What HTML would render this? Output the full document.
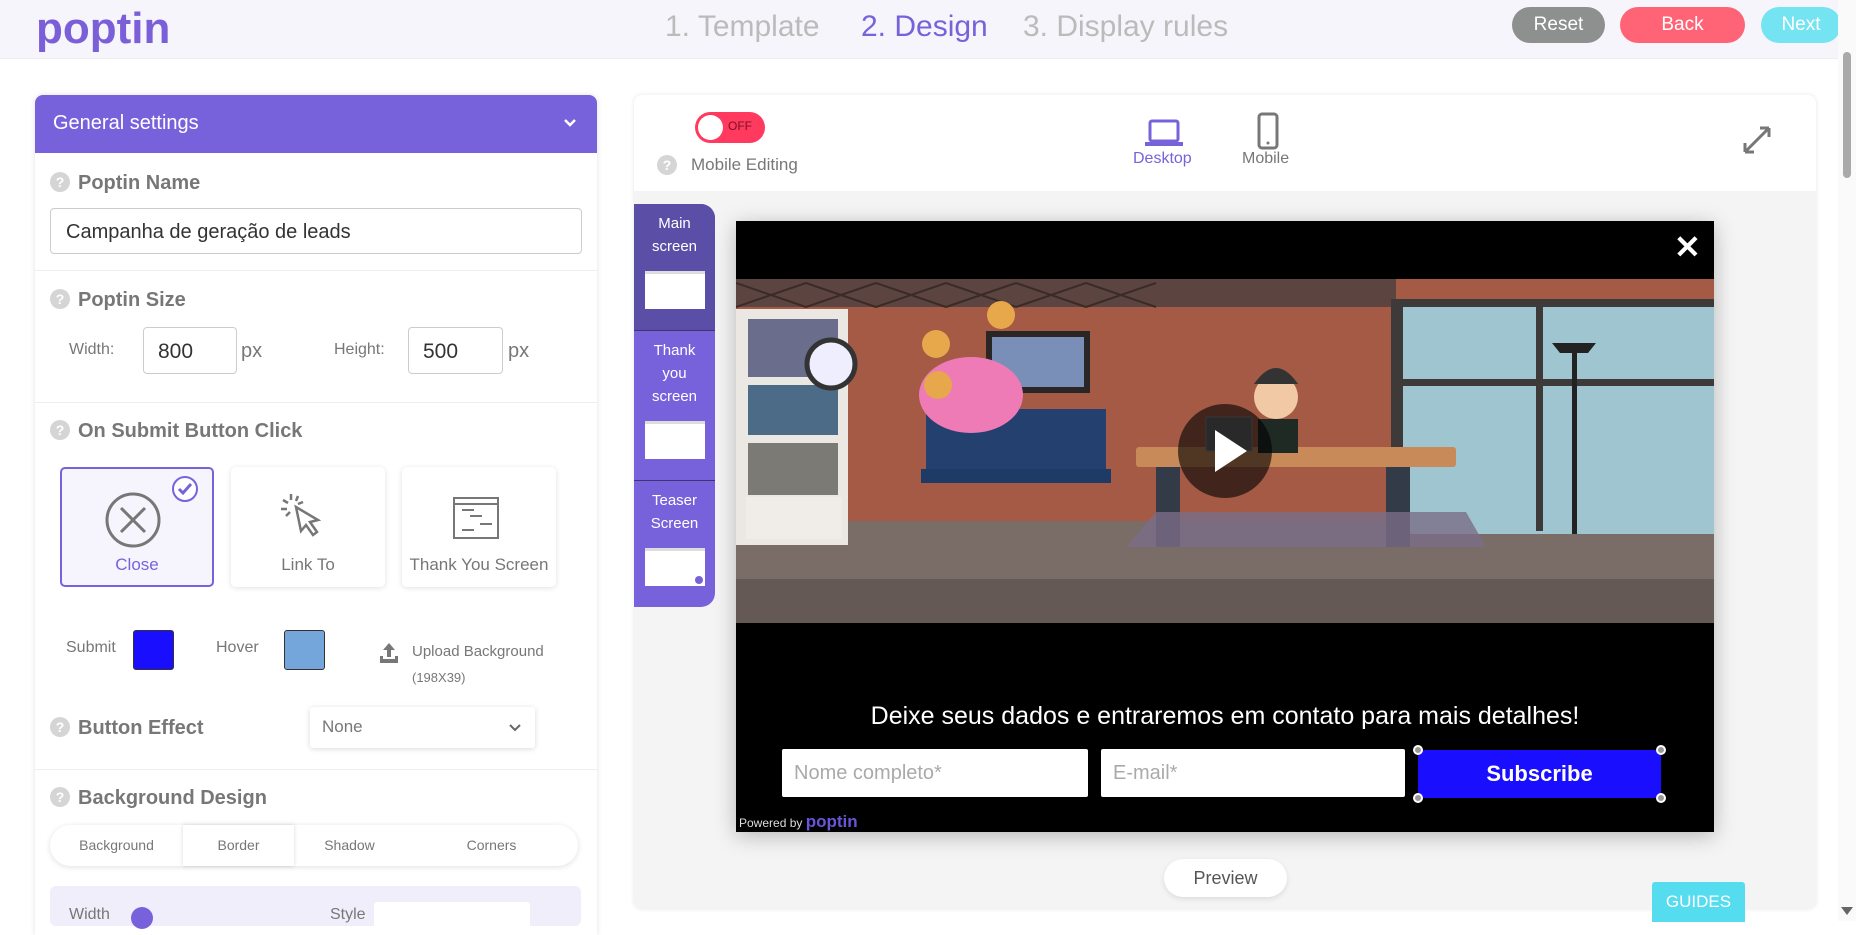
<!DOCTYPE html>
<html><head><meta charset="utf-8">
<style>
*{box-sizing:border-box;margin:0;padding:0}
body{width:1856px;height:921px;overflow:hidden;background:#fff;font-family:"Liberation Sans",sans-serif;position:relative;color:#555}
.a{position:absolute}
.hdr{left:0;top:0;width:1856px;height:59px;background:#f6f5fb;border-bottom:1px solid #eee}
.step{top:10px;font-size:30px;color:#bbb}
.btn{top:7px;height:36px;border-radius:18px;color:#fff;font-size:19px;text-align:center;line-height:36px}
.panel{left:35px;top:95px;width:562px;height:840px;background:#fff;box-shadow:0 0 6px rgba(0,0,0,.12);border-radius:8px 8px 0 0}
.ph{left:35px;top:95px;width:562px;height:58px;background:#7862dc;border-radius:8px 8px 0 0;color:#fff;font-size:20px;padding:17px 18px}
.lbl{font-size:20px;font-weight:bold;color:#777;left:50px}
.q{display:inline-block;width:20px;height:20px;border-radius:50%;background:#d5d5d5;color:#fff;font-size:14px;text-align:center;line-height:20px;margin-right:8px;vertical-align:2px;font-weight:bold}
.inp{border:1px solid #ccc;border-radius:4px;background:#fff;color:#333}
.div{left:35px;width:562px;height:1px;background:#eee}
.card{top:467px;width:154px;height:120px;background:#fff;border-radius:5px;box-shadow:0 1px 6px rgba(0,0,0,.12);text-align:center;font-size:17px;color:#777}
.card span{position:absolute;left:0;right:0;top:88px}
.sm{font-size:16px;color:#777}
.tab{top:825px;height:41px;font-size:14px;color:#777;text-align:center;line-height:41px}
.st{left:634px;width:81px;color:#fff;font-size:15px;text-align:center;line-height:23px;padding-top:8px}
.st i{display:block;margin:13px auto 0;width:60px;height:38px;background:#fff;border-top:3px solid #ddd}
</style></head><body>
<div class="a hdr"></div>
<div class="a" style="left:36px;top:4px;font-size:44px;font-weight:bold;color:#7b5fd9;letter-spacing:0px">poptin</div>
<div class="a step" style="left:665px">1. Template</div>
<div class="a step" style="left:861px;color:#7862dc">2. Design</div>
<div class="a step" style="left:1023px">3. Display rules</div>
<div class="a btn" style="left:1512px;width:93px;background:#8e9090">Reset</div>
<div class="a btn" style="left:1620px;width:125px;background:#ff6476">Back</div>
<div class="a btn" style="left:1761px;width:80px;background:#74e3f2">Next</div>

<div class="a panel"></div>
<div class="a ph">General settings<svg style="position:absolute;right:20px;top:23px" width="14" height="10"><path d="M2 2l5 5 5-5" fill="none" stroke="#fff" stroke-width="2.5"/></svg></div>
<div class="a lbl" style="top:172px"><span class="q">?</span>Poptin Name</div>
<div class="a inp" style="left:50px;top:208px;width:532px;height:46px;font-size:20px;padding:12px 15px">Campanha de geração de leads</div>
<div class="a div" style="top:270px"></div>
<div class="a lbl" style="top:289px"><span class="q">?</span>Poptin Size</div>
<div class="a sm" style="left:69px;top:341px">Width:</div>
<div class="a inp" style="left:143px;top:327px;width:94px;height:47px;font-size:21px;padding:12px 14px">800</div>
<div class="a" style="left:241px;top:340px;font-size:20px;color:#777">px</div>
<div class="a sm" style="left:334px;top:341px">Height:</div>
<div class="a inp" style="left:408px;top:327px;width:95px;height:47px;font-size:21px;padding:12px 14px">500</div>
<div class="a" style="left:508px;top:340px;font-size:20px;color:#777">px</div>
<div class="a div" style="top:402px"></div>
<div class="a lbl" style="top:420px"><span class="q">?</span>On Submit Button Click</div>
<div class="a card" style="left:60px;border:2px solid #7862dc;background:#f6f5fd;box-shadow:none;color:#7862dc">
<svg style="position:absolute;left:40px;top:20px" width="60" height="60"><circle cx="31" cy="31" r="26" fill="none" stroke="#777" stroke-width="3"/><path d="M19 19L43 43M43 19L19 43" stroke="#777" stroke-width="3"/></svg>
<svg style="position:absolute;left:108px;top:5px" width="30" height="30"><circle cx="15" cy="15" r="12" fill="#fff" stroke="#7862dc" stroke-width="2"/><path d="M9 15l4 4 8-9" fill="none" stroke="#7862dc" stroke-width="3"/></svg>
<span style="top:86px">Close</span></div>
<div class="a card" style="left:231px"><svg style="position:absolute;left:50px;top:25px" width="50" height="60"><path d="M15 15l5 24 5-6 7 10 4-3-7-10 8-2z" fill="none" stroke="#777" stroke-width="2.5"/><path d="M10 2v6M2 8l5 3M0 17h6M17 4l-2 5M22 10l-5 2M5 24l4-4" stroke="#777" stroke-width="2.5"/></svg><span>Link To</span></div>
<div class="a card" style="left:402px"><svg style="position:absolute;left:50px;top:27px" width="50" height="48"><rect x="2" y="4" width="44" height="40" fill="none" stroke="#777" stroke-width="2"/><path d="M2 10h44M10 16h12M18 22h12M28 30h12M10 36h12" stroke="#777" stroke-width="2"/></svg><span>Thank You Screen</span></div>
<div class="a sm" style="left:66px;top:639px">Submit</div>
<div class="a" style="left:133px;top:630px;width:41px;height:40px;background:#1a0eff;border:1px solid #333;border-radius:3px"></div>
<div class="a sm" style="left:216px;top:639px">Hover</div>
<div class="a" style="left:284px;top:630px;width:41px;height:40px;background:#74a6dc;border:1px solid #333;border-radius:3px"></div>
<svg class="a" style="left:379px;top:642px" width="20" height="22"><path d="M10 1l-6 7h4v7h4V8h4z M1 14v7h18v-7h-3v3H4v-3z" fill="#777"/></svg>
<div class="a" style="left:412px;top:643px;font-size:15px;color:#777">Upload Background</div>
<div class="a" style="left:412px;top:670px;font-size:13px;color:#777">(198X39)</div>
<div class="a lbl" style="top:717px"><span class="q">?</span>Button Effect</div>
<div class="a" style="left:310px;top:707px;width:225px;height:41px;background:#fff;box-shadow:0 1px 6px rgba(0,0,0,.15);border-radius:3px;font-size:17px;color:#777;padding:10px 12px">None<svg style="position:absolute;right:14px;top:17px" width="12" height="8"><path d="M1 1l5 5 5-5" fill="none" stroke="#666" stroke-width="2"/></svg></div>
<div class="a div" style="top:769px"></div>
<div class="a lbl" style="top:787px"><span class="q">?</span>Background Design</div>
<div class="a" style="left:50px;top:825px;width:528px;height:41px;border-radius:21px;background:#fff;box-shadow:0 1px 6px rgba(0,0,0,.13)"></div>
<div class="a" style="left:183px;top:825px;width:111px;height:41px;background:#fff;box-shadow:0 0 4px rgba(0,0,0,.15)"></div>
<div class="a tab" style="left:50px;width:133px">Background</div>
<div class="a tab" style="left:183px;width:111px">Border</div>
<div class="a tab" style="left:294px;width:111px">Shadow</div>
<div class="a tab" style="left:405px;width:173px">Corners</div>
<div class="a" style="left:50px;top:886px;width:531px;height:40px;background:#f0eefa;border-radius:6px"></div>
<div class="a" style="left:69px;top:906px;font-size:16px;color:#777">Width</div>
<div class="a" style="left:131px;top:907px;width:22px;height:22px;border-radius:50%;background:#7862dc"></div>
<div class="a" style="left:330px;top:906px;font-size:16px;color:#777">Style</div>
<div class="a" style="left:374px;top:902px;width:156px;height:30px;background:#fff;border-radius:3px"></div>

<div class="a" style="left:634px;top:95px;width:1182px;height:814px;background:#f4f4f4;border-radius:8px;box-shadow:0 0 5px rgba(0,0,0,.1)"></div>
<div class="a" style="left:634px;top:95px;width:1182px;height:96px;background:#fff;border-radius:8px 8px 0 0"></div>
<div class="a" style="left:695px;top:112px;width:70px;height:31px;border-radius:16px;background:#ff3a5e"></div>
<div class="a" style="left:698px;top:115px;width:25px;height:25px;border-radius:50%;background:#fff"></div>
<div class="a" style="left:728px;top:119px;font-size:12px;color:#7a1020">OFF</div>
<div class="a" style="left:657px;top:155px"><span class="q">?</span></div>
<div class="a" style="left:691px;top:155px;font-size:17px;color:#777">Mobile Editing</div>
<svg class="a" style="left:1144px;top:118px" width="40" height="32"><rect x="6" y="3" width="28" height="20" rx="2" fill="none" stroke="#7862dc" stroke-width="3"/><rect x="1" y="24" width="38" height="4" fill="#7862dc"/></svg>
<div class="a" style="left:1133px;top:150px;font-size:16px;color:#7862dc">Desktop</div>
<svg class="a" style="left:1256px;top:112px" width="24" height="38"><rect x="3" y="2" width="18" height="34" rx="3" fill="none" stroke="#777" stroke-width="3"/><circle cx="12" cy="31" r="1.5" fill="#777"/></svg>
<div class="a" style="left:1242px;top:150px;font-size:16px;color:#777">Mobile</div>
<svg class="a" style="left:1742px;top:125px" width="30" height="30"><path d="M3 27L27 3M27 3h-9M27 3v9M3 27h9M3 27v-9" fill="none" stroke="#777" stroke-width="3"/></svg>

<div class="a" style="left:634px;top:204px;width:81px;height:403px;background:#7862dc;border-radius:0 14px 14px 0"></div>
<div class="a st" style="top:204px;height:126px;background:#5b4ea6;border-radius:0 14px 0 0">Main<br>screen<i></i></div>
<div class="a st" style="top:330px;height:150px;border-top:1px solid #3d3470">Thank<br>you<br>screen<i></i></div>
<div class="a st" style="top:480px;height:127px;border-top:1px solid #3d3470">Teaser<br>Screen<i style="position:relative"><b style="position:absolute;right:2px;bottom:2px;width:8px;height:8px;border-radius:50%;background:#7862dc"></b></i></div>

<div class="a" style="left:736px;top:221px;width:978px;height:611px;background:#000;box-shadow:0 4px 20px rgba(0,0,0,.25)"></div>
<div class="a" style="left:1674px;top:228px;font-size:32px;font-weight:bold;color:#fff">&#10005;</div>
<svg class="a" style="left:736px;top:279px" width="978" height="344" viewBox="0 0 978 344">
<rect width="978" height="344" fill="#a45a45"/>
<rect x="0" y="0" width="660" height="28" fill="#5c4540"/>
<path d="M0 4L70 28M70 4L0 28M70 4L140 28M140 4L70 28M140 4L210 28M210 4L140 28M210 4L280 28M280 4L210 28M280 4L350 28M350 4L280 28M350 4L420 28M420 4L350 28" stroke="#3a2b28" stroke-width="2"/>
<rect x="0" y="242" width="978" height="102" fill="#7a6c66"/>
<rect x="0" y="300" width="978" height="44" fill="#655955"/>
<rect x="660" y="20" width="318" height="235" fill="#9fc6d0"/>
<path d="M655 20h323v8H667v227h-12z" fill="#3e3a3a"/>
<rect x="800" y="24" width="7" height="228" fill="#3e3a3a"/>
<rect x="667" y="100" width="311" height="7" fill="#3e3a3a"/>
<rect x="0" y="30" width="112" height="236" fill="#ebe8e4"/>
<rect x="12" y="40" width="90" height="58" fill="#6a6e8c"/>
<rect x="12" y="106" width="90" height="50" fill="#4b6b86"/>
<rect x="12" y="164" width="90" height="52" fill="#7c7a74"/>
<rect x="10" y="218" width="96" height="42" fill="#f0ede8"/>
<rect x="250" y="52" width="104" height="62" fill="#2b2626"/>
<rect x="256" y="58" width="92" height="50" fill="#7a8fb7"/>
<rect x="190" y="130" width="180" height="66" fill="#23406f"/>
<rect x="185" y="190" width="190" height="14" fill="#1e3a66"/>
<ellipse cx="235" cy="116" rx="52" ry="38" fill="#ee7bb6"/>
<circle cx="95" cy="85" r="24" fill="#eef" stroke="#333" stroke-width="5"/>
<circle cx="265" cy="36" r="14" fill="#e6a84a"/>
<circle cx="200" cy="65" r="14" fill="#e6a84a"/>
<circle cx="202" cy="106" r="14" fill="#e6a84a"/>
<rect x="400" y="168" width="320" height="20" rx="3" fill="#c98a5a"/>
<rect x="420" y="188" width="24" height="80" fill="#333b48"/>
<rect x="650" y="188" width="24" height="80" fill="#333b48"/>
<path d="M390 268l30-35h310l20 35z" fill="#7a6e88" opacity=".8"/>
<rect x="470" y="138" width="46" height="34" fill="#666" stroke="#888"/>
<circle cx="540" cy="118" r="22" fill="#f1c9a5"/>
<path d="M518 105q22-32 44 0z" fill="#333"/>
<rect x="522" y="140" width="40" height="34" fill="#1f2a24"/>
<rect x="836" y="70" width="5" height="185" fill="#222"/>
<path d="M816 64h44l-8 10h-28z" fill="#222"/>
<circle cx="489" cy="172" r="47" fill="#000" opacity=".6"/>
<path d="M479 151v42l32-21z" fill="#fff"/>
</svg>
<div class="a" style="left:736px;top:702px;width:978px;text-align:center;font-size:25px;color:#fff">Deixe seus dados e entraremos em contato para mais detalhes!</div>
<div class="a" style="left:782px;top:749px;width:306px;height:48px;background:#fff;border-radius:2px;font-size:20px;color:#aaa;padding:13px 12px">Nome completo*</div>
<div class="a" style="left:1101px;top:749px;width:304px;height:48px;background:#fff;border-radius:2px;font-size:20px;color:#aaa;padding:13px 12px">E-mail*</div>
<div class="a" style="left:1418px;top:750px;width:243px;height:48px;background:#1a0eff;color:#fff;font-size:22px;font-weight:bold;text-align:center;line-height:48px">Subscribe</div>
<div class="a" style="left:1413px;top:745px;width:10px;height:10px;border-radius:50%;background:#999;border:2px solid #fff"></div>
<div class="a" style="left:1656px;top:745px;width:10px;height:10px;border-radius:50%;background:#999;border:2px solid #fff"></div>
<div class="a" style="left:1413px;top:793px;width:10px;height:10px;border-radius:50%;background:#999;border:2px solid #fff"></div>
<div class="a" style="left:1656px;top:793px;width:10px;height:10px;border-radius:50%;background:#999;border:2px solid #fff"></div>
<div class="a" style="left:739px;top:812px;font-size:12px;color:#ddd">Powered by <b style="font-size:17px;color:#6a54d8">poptin</b></div>
<div class="a" style="left:1164px;top:859px;width:123px;height:38px;border-radius:19px;background:#fff;box-shadow:0 2px 6px rgba(0,0,0,.1);text-align:center;line-height:38px;font-size:18px;color:#555">Preview</div>
<div class="a" style="left:1652px;top:882px;width:93px;height:40px;background:#55dcef;border-radius:3px 3px 0 0;color:#fff;font-size:17px;text-align:center;line-height:40px">GUIDES</div>
<div class="a" style="left:1838px;top:0;width:18px;height:921px;background:#fafafa"></div>
<div class="a" style="left:1843px;top:52px;width:8px;height:126px;background:#aaa;border-radius:4px"></div>
<div class="a" style="left:1841px;top:907px;width:0;height:0;border-left:6px solid transparent;border-right:6px solid transparent;border-top:8px solid #666"></div>
</body></html>
